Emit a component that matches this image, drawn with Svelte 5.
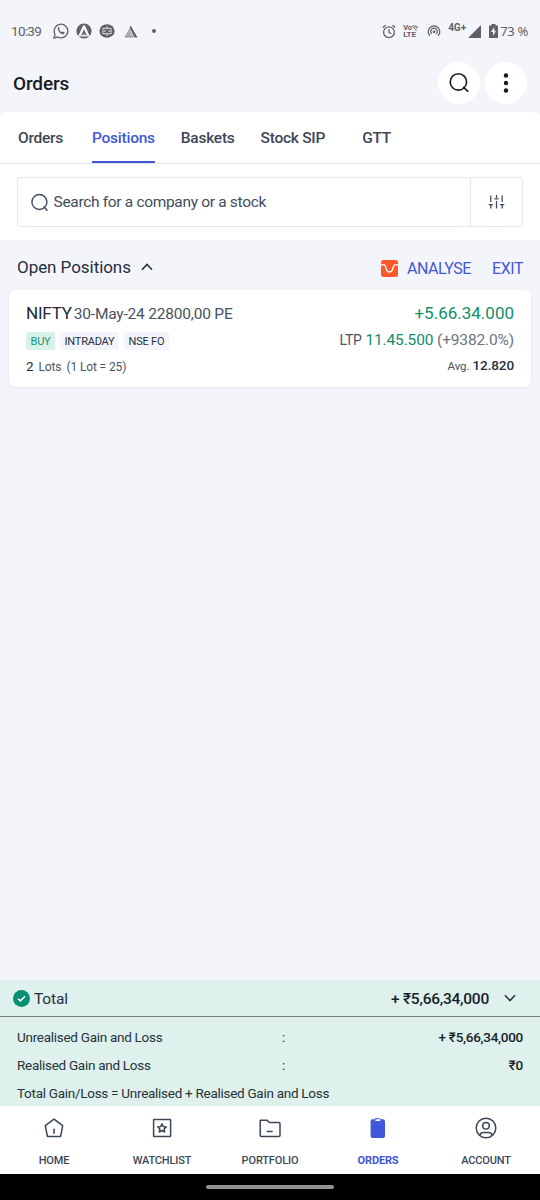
<script lang="ts">
	let activeTab = $state('Positions');
	let activeNav = $state('ORDERS');
	let openPositions = $state(true);
	let showTotals = $state(true);

	const tabs = ['Orders', 'Positions', 'Baskets', 'Stock SIP', 'GTT'];
	const navItems = ['HOME', 'WATCHLIST', 'PORTFOLIO', 'ORDERS', 'ACCOUNT'];
	const totals = [
		{ label: 'Unrealised Gain and Loss', value: '+ ₹5,66,34,000' },
		{ label: 'Realised Gain and Loss', value: '₹0' }
	];
</script>

{#snippet nav_icon(name)}
	<svg class="nav-icon" viewBox="0 0 24 24" fill="none" stroke="currentColor" stroke-width="1.5" stroke-linejoin="round" stroke-linecap="round">
		{#if name === 'HOME'}
			<path d="M12 3.2 20.7 9.7 18.6 20.4H5.4L3.3 9.7Z" />
			<path d="M12 13.2v4" />
		{:else if name === 'WATCHLIST'}
			<rect x="3.6" y="3.4" width="17" height="17" rx="0.5" />
			<path d="m12 7.8 1.3 2.8 3 .4-2.2 2 .6 3-2.7-1.5L9.3 16l.6-3-2.2-2 3-.4Z" />
		{:else if name === 'PORTFOLIO'}
			<path d="M2.2 4.2h7l2 2.3h9.6a1.2 1.2 0 0 1 1.2 1.2v11.5a1.2 1.2 0 0 1-1.2 1.2H3.4a1.2 1.2 0 0 1-1.2-1.2Z" />
			<path d="M9.2 15.6h5" />
		{:else if name === 'ORDERS'}
			<rect x="4.6" y="3.2" width="14.4" height="18.8" rx="2" fill="currentColor" stroke="none" />
			<rect x="8.8" y="2.7" width="6" height="2.8" rx="1.3" fill="#fff" stroke-width="1" />
		{:else}
			<circle cx="12" cy="12" r="9.8" />
			<circle cx="12" cy="9.8" r="3.3" />
			<path d="M5.8 19.3c.6-2 2-2.8 3.8-2.8h4.8c1.8 0 3.2.8 3.8 2.8" />
		{/if}
	</svg>
{/snippet}

<div class="screen">
	<div class="status-bar">
		<span class="time">10:39</span>
		<svg width="16" height="16" viewBox="0 0 16 16" fill="none" stroke="currentColor" stroke-width="1.3">
			<path d="M1 15l1-3.8A6.8 6.8 0 1 1 4.8 14Z" />
			<path d="M5 4.3c.6-.5 1-.2 1.2.3l.5 1.2-.6.9c.6 1.3 1.5 2 2.800 2.6l.8-.8 1.6.8c.5.3.3 1.5-.6 1.900-2.600.8-6.800-3.400-5.700-6.900Z" fill="currentColor" stroke="none" />
		</svg>
		<svg class="angel" width="16" height="16" viewBox="0 0 16 16">
			<circle cx="8" cy="8" r="7.6" fill="currentColor" />
			<path d="M7 2.5h2L13.600 12.800H10.800L8 6.300 5.200 12.800H2.400Z" fill="#f4f5fb" />
			<path d="M1.500 12.400h4.200L8 11.300l2.300 1.100h4.200v1.100H1.500Z" fill="#f4f5fb" />
		</svg>
		<svg class="coin" width="16" height="16" viewBox="0 0 16 16">
			<ellipse cx="8" cy="8" rx="7.6" ry="6.8" fill="currentColor" />
			<path d="M6.800 5.300H5.200Q3.700 5.300 3.700 6.500M3.700 9.500Q3.700 10.700 5.200 10.700H6.800M9.200 5.300h1.600q1.500 0 1.500 1.200M12.300 9.500q0 1.200-1.500 1.200H9.200" stroke="#f4f5fb" stroke-width="1.100" fill="none" />
			<path d="M3 8h3.700M9.300 8H13M8 3.500v2.800M8 9.700v2.800" stroke="#f4f5fb" stroke-width="1.200" />
		</svg>
		<svg class="peak" width="14" height="13" viewBox="0 0 14 13">
			<path d="M6.600.5 13.500 12.500H10.500L5.500 2.800Z" fill="currentColor" />
			<path d="M5.200 3.800 9.800 12.500H.5Z" fill="currentColor" opacity=".65" />
			<path d="M4.200 6.200h2.500M3.300 8.200h4.500M2.200 10.200h7" stroke="#f4f5fb" stroke-width=".5" />
		</svg>
		<span class="more-dot"></span>

		<div class="status-right">
			<svg width="14" height="15" viewBox="0 0 14 15" fill="none" stroke="currentColor" stroke-width="1.3">
				<circle cx="7" cy="8.2" r="5.4" />
				<path d="M7 5v3.4l2.3 1.4M.7 3.6 3.6 1.2M13.3 3.6 10.4 1.2" />
			</svg>
			<div class="volte">
				<span>Vo<svg width="6" height="6" viewBox="0 0 6 6" fill="none" stroke="currentColor"><path d="M0 .5 4.500 6M1 .5q3 .5 3.500 3M3.500.3q2 1 2.300 3.200" stroke-width=".9" /></svg></span>
				<span class="lte">LTE</span>
			</div>
			<svg width="14" height="14" viewBox="0 0 15 14" fill="none" stroke="currentColor" stroke-width="1.4">
				<path d="M3.2 12.2a6.2 6.2 0 1 1 8.600 0" />
				<path d="M5.1 10a3.5 3.5 0 1 1 4.800 0" />
				<circle cx="7.5" cy="7.9" r="1.400" fill="currentColor" stroke="none" />
			</svg>
			<span class="network">4G+</span>
			<svg width="13" height="13" viewBox="0 0 13 13"><path d="M13 0V13H0Z" fill="currentColor" /></svg>
			<svg class="battery" width="9" height="14" viewBox="0 0 9 14">
				<path d="M2.500 0h4v1.500H9V14H0V1.500h2.500Z" fill="currentColor" />
				<path d="M5.200 3 2 8h2v4l3-5.200H5.200Z" fill="#f4f5fb" />
			</svg>
			<span class="percent">73 %</span>
		</div>
	</div>

	<header>
		<h1>Orders</h1>
		<button class="round" aria-label="Search">
			<svg width="22" height="22" viewBox="0 0 22 22" fill="none" stroke="currentColor" stroke-width="1.6">
				<circle cx="10.4" cy="9.9" r="8.2" />
				<path d="m15.200 14.800 5 4.800" />
			</svg>
		</button>
		<button class="round" aria-label="More options">
			<svg width="6" height="20" viewBox="0 0 6 20" fill="currentColor">
				<circle cx="3" cy="2.5" r="2.2" />
				<circle cx="3" cy="10" r="2.2" />
				<circle cx="3" cy="17.5" r="2.2" />
			</svg>
		</button>
	</header>

	<section class="top-panel">
		<nav class="tabs">
			{#each tabs as tab}
				<button class="tab" class:active={activeTab === tab} onclick={() => (activeTab = tab)}>{tab}</button>
			{/each}
		</nav>
		<div class="search">
			<svg width="18" height="19" viewBox="0 0 18 19" fill="none" stroke="currentColor" stroke-width="1.4">
				<circle cx="8.4" cy="9" r="7.5" />
				<path d="m12.600 13.500 3.800 4.300" />
			</svg>
			<span class="placeholder">Search for a company or a stock</span>
			<button class="filter" aria-label="Filter">
				<svg width="17" height="14" viewBox="0 0 17 14" fill="none" stroke="currentColor" stroke-width="1.3">
					<path d="M2.800.5v6.500M2.800 10v3.500M8.500 0v3M8.500 6v7.500M14.200.5v6.500M14.200 10v3.500" />
					<path d="M.7 9.700h4.200M6.400 3.900h4.200M12.100 9.700h4.200" />
				</svg>
			</button>
		</div>
	</section>

	<main>
		<div class="section-head">
			<button class="section-title" onclick={() => (openPositions = !openPositions)}>
				<span>Open Positions</span>
				<svg width="12" height="8" viewBox="0 0 12 8" fill="none" stroke="currentColor" stroke-width="1.5"><path d="M1 6.700 6 1.400l5 5.300" /></svg>
			</button>
			<button class="link analyse">
				<svg width="17" height="17" viewBox="0 0 17 17">
					<rect width="17" height="17" rx="2.5" fill="#fb5a28" />
					<path d="M0 4.800h3.200c2.300 0 1.500 7.100 4.300 7.100h2c2.800 0 2-7.100 4.300-7.100H17" fill="none" stroke="#fff" stroke-width="1.3" />
				</svg>
				<span>ANALYSE</span>
			</button>
			<button class="link exit">EXIT</button>
		</div>

		{#if openPositions}
			<article class="card">
				<div class="left">
					<div class="name"><strong>NIFTY</strong><span>30-May-24 22800,00 PE</span></div>
					<div class="tags">
						<span class="tag buy">BUY</span>
						<span class="tag">INTRADAY</span>
						<span class="tag">NSE FO</span>
					</div>
					<div class="lots"><b>2</b><span>Lots</span><span>(1 Lot = 25)</span></div>
				</div>
				<div class="right">
					<div class="gain">+5.66.34.000</div>
					<div class="ltp"><span class="key">LTP</span> <span class="price">11.45.500</span> <span class="change">(+9382.0%)</span></div>
					<div class="avg"><span>Avg.</span> <b>12.820</b></div>
				</div>
			</article>
		{/if}
	</main>

	<section class="summary">
		<div class="total">
			<svg width="17" height="17" viewBox="0 0 17 17">
				<circle cx="8.5" cy="8.5" r="8.5" fill="#069073" />
				<path d="m4.900 8.700 2.500 2.200L12 6.300" fill="none" stroke="#fff" stroke-width="1.5" />
			</svg>
			<span class="total-label">Total</span>
			<span class="total-value">+ ₹5,66,34,000</span>
			<button class="toggle" aria-label="Toggle totals" onclick={() => (showTotals = !showTotals)}>
				<svg width="12" height="8" viewBox="0 0 12 8" fill="none" stroke="currentColor" stroke-width="1.5"><path d="m1 1.300 5 5.300 5-5.300" /></svg>
			</button>
		</div>
		{#if showTotals}
			<div class="breakdown">
				{#each totals as row}
					<div class="row">
						<span>{row.label}</span>
						<span>:</span>
						<b>{row.value}</b>
					</div>
				{/each}
				<div class="row note"><span>Total Gain/Loss = Unrealised + Realised Gain and Loss</span></div>
			</div>
		{/if}
	</section>

	<nav class="bottom-nav">
		{#each navItems as item}
			<button class="nav-item" class:active={activeNav === item} onclick={() => (activeNav = item)}>
				{@render nav_icon(item)}
				<span>{item}</span>
			</button>
		{/each}
	</nav>
	<div class="gesture-bar"><span></span></div>
</div>

<style>
	:global(body) {
		margin: 0;
	}

	.screen {
		width: 540px;
		height: 1200px;
		display: flex;
		flex-direction: column;
		overflow: hidden;
		background: #f4f5fb;
		color: #252f3c;
		font-family: Roboto, 'Noto Sans', sans-serif;
	}

	.screen * {
		box-sizing: border-box;
	}

	svg {
		display: block;
		flex: none;
	}

	span,
	b,
	strong {
		white-space: nowrap;
	}

	b,
	strong {
		font-weight: 500;
	}

	button {
		border: 0;
		padding: 0;
		background: none;
		color: inherit;
		font: inherit;
		letter-spacing: inherit;
		white-space: nowrap;
	}

	.status-bar {
		height: 62px;
		padding: 0 12px 0 11px;
		display: flex;
		align-items: center;
		color: #606166;
	}

	.time {
		width: 42px;
		font-size: 13.5px;
		letter-spacing: -0.7px;
	}

	.angel,
	.coin {
		margin-left: 7px;
	}

	.peak {
		margin-left: 9px;
	}

	.more-dot {
		width: 4px;
		height: 4px;
		margin-left: 14px;
		border-radius: 50%;
		background: #606166;
	}

	.status-right {
		margin-left: auto;
		display: flex;
		align-items: center;
	}

	.volte {
		width: 16px;
		margin: 0 8px 0 7px;
		display: flex;
		flex-direction: column;
		font-size: 7.5px;
		line-height: 7px;
		font-weight: 700;
	}

	.volte svg {
		display: inline-block;
		vertical-align: -1px;
	}

	.volte > span {
		height: 7px;
	}

	.lte {
		font-size: 8px;
	}

	.network {
		margin: 0 2px 6px 7px;
		font-size: 10px;
		line-height: 10px;
		font-weight: 700;
	}

	.battery {
		margin: 0 2px 0 8px;
	}

	.percent {
		font-family: 'Noto Sans', sans-serif;
		font-size: 13px;
		letter-spacing: -0.3px;
	}

	header {
		height: 50px;
		padding: 0 13px;
		display: flex;
		align-items: center;
		gap: 5px;
	}

	h1 {
		flex: 1;
		margin: 0;
		padding-bottom: 7px;
		color: #161b26;
		font-size: 19px;
		line-height: 22px;
		font-weight: 500;
		letter-spacing: -0.15px;
	}

	.round {
		width: 42px;
		height: 42px;
		margin-bottom: 9px;
		border-radius: 50%;
		display: flex;
		align-items: center;
		justify-content: center;
		background: #fff;
		color: #141a25;
	}

	.top-panel {
		height: 128px;
		background: #fff;
		border-radius: 6px 6px 0 0;
	}

	.tabs {
		height: 52px;
		padding-left: 18px;
		display: flex;
		border-bottom: 1px solid #e3e5ed;
		color: #3c4757;
		font-size: 15.5px;
		font-weight: 500;
		letter-spacing: -0.25px;
	}

	.tab {
		height: 51px;
		padding-top: 2px;
		margin-right: 26px;
		border-bottom: 2px solid transparent;
	}

	.tab:nth-child(4) {
		margin-right: 37px;
	}

	.tab:nth-child(1) {
		margin-right: 29px;
	}

	.tab.active {
		color: #4359d4;
		border-color: #4359d4;
	}

	.search {
		height: 50px;
		margin: 13px 17px 0;
		padding-left: 13px;
		display: flex;
		align-items: center;
		border: 1px solid #e5e8f1;
		border-radius: 3px;
		color: #414c5b;
	}

	.placeholder {
		flex: 1;
		margin-left: 4.5px;
		font-size: 15.5px;
		letter-spacing: -0.32px;
	}

	.filter {
		width: 52px;
		height: 48px;
		display: flex;
		align-items: center;
		justify-content: center;
		border-left: 1px solid #e5e8f1;
	}

	main {
		flex: 1;
	}

	.section-head {
		height: 50px;
		padding: 0 17px;
		display: flex;
		align-items: center;
	}

	.section-title {
		display: flex;
		align-items: center;
		gap: 10px;
		flex: 1;
		margin-top: 4px;
		font-size: 17px;
		letter-spacing: -0.05px;
	}

	.link {
		margin-top: 7px;
		color: #4359d4;
		font-size: 16px;
		letter-spacing: -0.45px;
	}

	.analyse {
		display: flex;
		align-items: center;
		gap: 9px;
	}

	.exit {
		margin-left: 21px;
	}

	.card {
		height: 97px;
		margin: 0 9px;
		padding: 13px 17px 0;
		display: flex;
		justify-content: space-between;
		background: #fff;
		border-radius: 7px;
		box-shadow: 0 1px 3px rgba(50, 60, 100, 0.09);
	}

	.name {
		height: 21px;
		display: flex;
		align-items: baseline;
		gap: 2px;
		line-height: 21px;
		font-size: 15.5px;
		letter-spacing: -0.2px;
		color: #485361;
	}

	.name strong {
		font-size: 17px;
		font-weight: 400;
		color: #202833;
	}

	.tags {
		display: flex;
		gap: 5px;
		margin-top: 8px;
	}

	.tag {
		height: 18px;
		padding: 0 4.5px;
		border-radius: 2px;
		background: #f4f5fb;
		font-size: 11px;
		line-height: 19px;
		letter-spacing: -0.2px;
	}

	.tag.buy {
		background: #d9f1eb;
		color: #159577;
	}

	.lots {
		display: flex;
		align-items: baseline;
		gap: 5px;
		margin-top: 7px;
		line-height: 19px;
		font-size: 12px;
		letter-spacing: -0.12px;
		color: #4a5460;
	}

	.lots b {
		font-size: 13.5px;
		font-weight: 400;
		color: #252f3c;
	}

	.right {
		text-align: right;
	}

	.gain {
		font-size: 17px;
		line-height: 21px;
		color: #118e68;
	}

	.ltp {
		margin-top: 6px;
		font-size: 15.5px;
		line-height: 21px;
		letter-spacing: -0.15px;
		color: #6d747e;
	}

	.key {
		font-size: 14px;
		color: #4a5460;
	}

	.price {
		color: #118e68;
	}

	.avg {
		margin-top: 5px;
		font-size: 11.5px;
		line-height: 18px;
		color: #4a5460;
	}

	.avg b {
		font-size: 13.5px;
		letter-spacing: -0.1px;
		color: #252f3c;
	}

	.summary {
		height: 126px;
		background: #def1ed;
	}

	.total {
		height: 37px;
		padding: 0 24px 0 13px;
		display: flex;
		align-items: center;
		border-bottom: 1px solid #75827f;
	}

	.total-label {
		flex: 1;
		margin: 2px 0 0 4px;
		font-size: 15.5px;
		letter-spacing: -0.15px;
	}

	.total-value {
		margin-top: 2px;
		font-size: 15.5px;
		font-weight: 500;
		letter-spacing: -0.25px;
		color: #17212a;
	}

	.toggle {
		margin-left: 15px;
	}

	.breakdown {
		padding: 6px 17px 0;
	}

	.row {
		height: 28px;
		display: grid;
		grid-template-columns: 265px 1fr auto;
		align-items: center;
		font-size: 13.5px;
		letter-spacing: -0.28px;
		color: #26323a;
	}

	.row b {
		color: #17212a;
	}

	.bottom-nav {
		height: 68px;
		display: grid;
		grid-template-columns: repeat(5, 1fr);
		background: #fff;
	}

	.nav-item {
		display: flex;
		flex-direction: column;
		align-items: center;
		padding-top: 10px;
		color: #3c4757;
		font-size: 11px;
		line-height: 14px;
		font-weight: 500;
		letter-spacing: -0.15px;
	}

	.nav-icon {
		width: 24px;
		height: 24px;
		margin-bottom: 14px;
	}

	.nav-item.active {
		color: #3f57da;
		font-weight: 700;
	}

	.gesture-bar {
		height: 26px;
		display: flex;
		justify-content: center;
		background: #000;
	}

	.gesture-bar span {
		width: 128px;
		height: 4px;
		margin-top: 11px;
		border-radius: 2px;
		background: #929292;
	}
</style>
